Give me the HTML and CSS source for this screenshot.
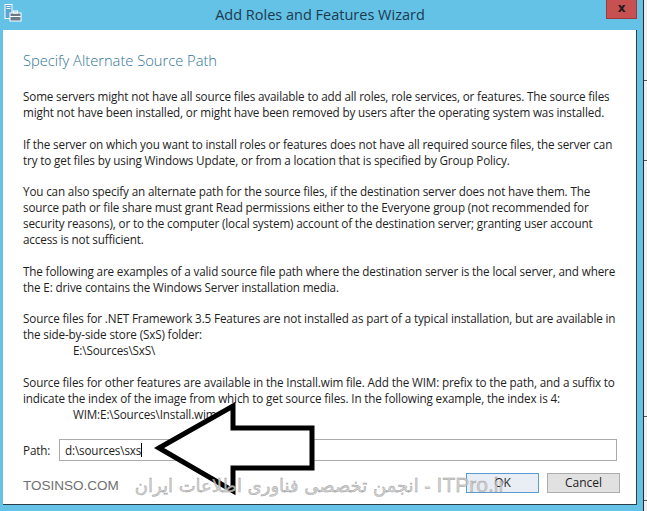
FILE: index.html
```html
<!DOCTYPE html>
<html lang="en">
<head>
    <meta charset="UTF-8">
    <title>Add Roles and Features Wizard</title>
    <link rel="stylesheet" href="styles.css">
</head>
<body>
    <div class="desktop">
        <div class="window">
            <!-- Title bar -->
            <div class="titlebar">
                <svg class="app-icon" width="18" height="18" viewBox="0 0 18 18">
                    <rect x="1" y="0.5" width="7" height="14" fill="#5aa7d6" stroke="#ffffff" stroke-width="1"/>
                    <rect x="2.5" y="2" width="4" height="1" fill="#ffffff"/>
                    <rect x="2.5" y="4" width="4" height="1" fill="#ffffff"/>
                    <rect x="6" y="9" width="11" height="8" fill="#6a7a88" stroke="#ffffff" stroke-width="1"/>
                    <rect x="9.5" y="7" width="4" height="2" fill="none" stroke="#ffffff" stroke-width="1"/>
                    <rect x="6" y="12" width="11" height="1" fill="#ffffff"/>
                </svg>
                <span class="title">Add Roles and Features Wizard</span>
                <div class="close">x</div>
            </div>

            <div class="client-row">
                <div class="client">
                    <h1>Specify Alternate Source Path</h1>

                    <p>Some servers might not have all source files available to add all roles, role services, or features. The source files<br>
                    might not have been installed, or might have been removed by users after the operating system was installed.</p>

                    <p>If the server on which you want to install roles or features does not have all required source files, the server can<br>
                    try to get files by using Windows Update, or from a location that is specified by Group Policy.</p>

                    <p>You can also specify an alternate path for the source files, if the destination server does not have them. The<br>
                    source path or file share must grant Read permissions either to the Everyone group (not recommended for<br>
                    security reasons), or to the computer (local system) account of the destination server; granting user account<br>
                    access is not sufficient.</p>

                    <p>The following are examples of a valid source file path where the destination server is the local server, and where<br>
                    the E: drive contains the Windows Server installation media.</p>

                    <p>Source files for .NET Framework 3.5 Features are not installed as part of a typical installation, but are available in<br>
                    the side-by-side store (SxS) folder:<br>
                    <span class="example">E:\Sources\SxS\</span></p>

                    <p class="last">Source files for other features are available in the Install.wim file. Add the WIM: prefix to the path, and a suffix to<br>
                    indicate the index of the image from which to get source files. In the following example, the index is 4:<br>
                    <span class="example">WIM:E:\Sources\Install.wim:4</span></p>

                    <div class="path-row">
                        <label for="path">Path:</label>
                        <div class="path-input" id="path">d:\sources\sxs<span class="caret"></span></div>
                    </div>

                    <div class="buttons">
                        <button class="btn btn-default">OK</button>
                        <button class="btn">Cancel</button>
                    </div>
                </div>
                <div class="frame-gap"></div>
            </div>
        </div>
        <div class="behind">
            <div class="tick t1"></div>
            <div class="tick t2"></div>
            <div class="tick t3"></div>
            <div class="tick t4"></div>
        </div>
    </div>

    <!-- hand drawn arrow over the screenshot -->
    <svg class="arrow" width="647" height="511" viewBox="0 0 647 511">
        <polygon points="159,448 233,406 233,428 312,428 312,468 233,468 233,491" fill="#ffffff" stroke="#000000" stroke-width="5" stroke-linejoin="miter"/>
    </svg>

    <!-- watermark -->
    <div class="watermark">
        <span class="wm-site">TOSINSO.COM</span>
        <span class="wm-fa">انجمن تخصصی فناوری اطلاعات ایران - <span class="wm-itpro">ITPro.ir</span></span>
    </div>
</body>
</html>
```

FILE: styles.css
```css
body {
    margin: 0;
    width: 647px;
    height: 511px;
    overflow: hidden;
    background-color: #63c2e6;
    font-family: 'Open Sans', sans-serif;
    position: relative;
}
.desktop {
    display: flex;
    height: 511px;
}
.window {
    width: 643px;
    display: flex;
    flex-direction: column;
}
.titlebar {
    height: 30px;
    display: flex;
    align-items: flex-start;
    position: relative;
}
.app-icon {
    margin: 4px 0 0 4px;
}
.title {
    flex: 1;
    text-align: center;
    font-size: 14.5px;
    color: #1d3a4f;
    margin-top: 5px;
    padding-left: 12px;
}
.close {
    width: 31px;
    height: 19px;
    margin-right: 6px;
    background-color: #c75050;
    border: 1px solid #9e3a3a;
    border-top: none;
    box-sizing: border-box;
    color: #1a1a1a;
    font-family: 'DejaVu Sans', sans-serif;
    font-weight: bold;
    font-size: 12px;
    line-height: 16px;
    text-align: center;
}
.client-row {
    display: flex;
    padding-left: 3px;
}
.client {
    width: 634px;
    height: 475px;
    box-sizing: border-box;
    background: white;
    border-right: 1px solid #2a3f4c;
    border-bottom: 1px solid #2a3f4c;
    padding: 20px 0 0 20px;
    font-size: 11.7px;
    letter-spacing: -0.15px;
    color: #1e1e1e;
}
.client h1 {
    font-weight: 300;
    font-size: 14.7px;
    letter-spacing: 0;
    line-height: 20px;
    color: #2f7595;
    margin: 0 0 18px;
}
.client p {
    margin: 0 0 15.5px;
    line-height: 16px;
    white-space: nowrap;
}
.client p.last {
    margin-bottom: 0;
}
.example {
    padding-left: 50px;
}
.path-row {
    display: flex;
    align-items: center;
    margin-top: 17px;
}
.path-row label {
    width: 36px;
}
.path-input {
    width: 558px;
    height: 22px;
    box-sizing: border-box;
    border: 1px solid #ababab;
    padding: 0 5px;
    line-height: 20px;
}
.caret {
    display: inline-block;
    width: 1px;
    height: 14px;
    background: #000;
    vertical-align: -2px;
}
.buttons {
    display: flex;
    justify-content: flex-end;
    gap: 8px;
    width: 597px;
    margin-top: 12px;
}
.btn {
    width: 73px;
    height: 20px;
    font-family: 'Open Sans', sans-serif;
    font-size: 12px;
    color: #1e1e1e;
    background-color: #e1e1e1;
    border: 1px solid #adadad;
    padding: 0;
}
.btn-default {
    background-color: #e8eef4;
    border-color: #5b9bd5;
}
.behind {
    flex: 1;
    background-color: #eef0f0;
    border-left: 1px solid #2b2b2b;
    position: relative;
}
.tick {
    position: absolute;
    left: 0;
    width: 3px;
    height: 1px;
    background: #555;
}
.t1 { top: 80px; }
.t2 { top: 160px; }
.t3 { top: 416px; }
.t4 { top: 500px; }
.arrow {
    position: absolute;
    top: 0;
    left: 0;
    pointer-events: none;
}
.watermark {
    position: absolute;
    left: 23px;
    top: 473px;
    display: flex;
    align-items: center;
    gap: 16px;
    pointer-events: none;
}
.wm-site {
    font-family: 'Liberation Sans', sans-serif;
    font-size: 13.5px;
    color: #707070;
}
.wm-fa {
    font-family: 'DejaVu Sans', sans-serif;
    font-size: 18px;
    color: rgba(205, 205, 205, 0.85);
    -webkit-text-stroke: 0.4px #999999;
}
.wm-itpro {
    font-family: 'Liberation Sans', sans-serif;
    font-size: 21px;
}
```
